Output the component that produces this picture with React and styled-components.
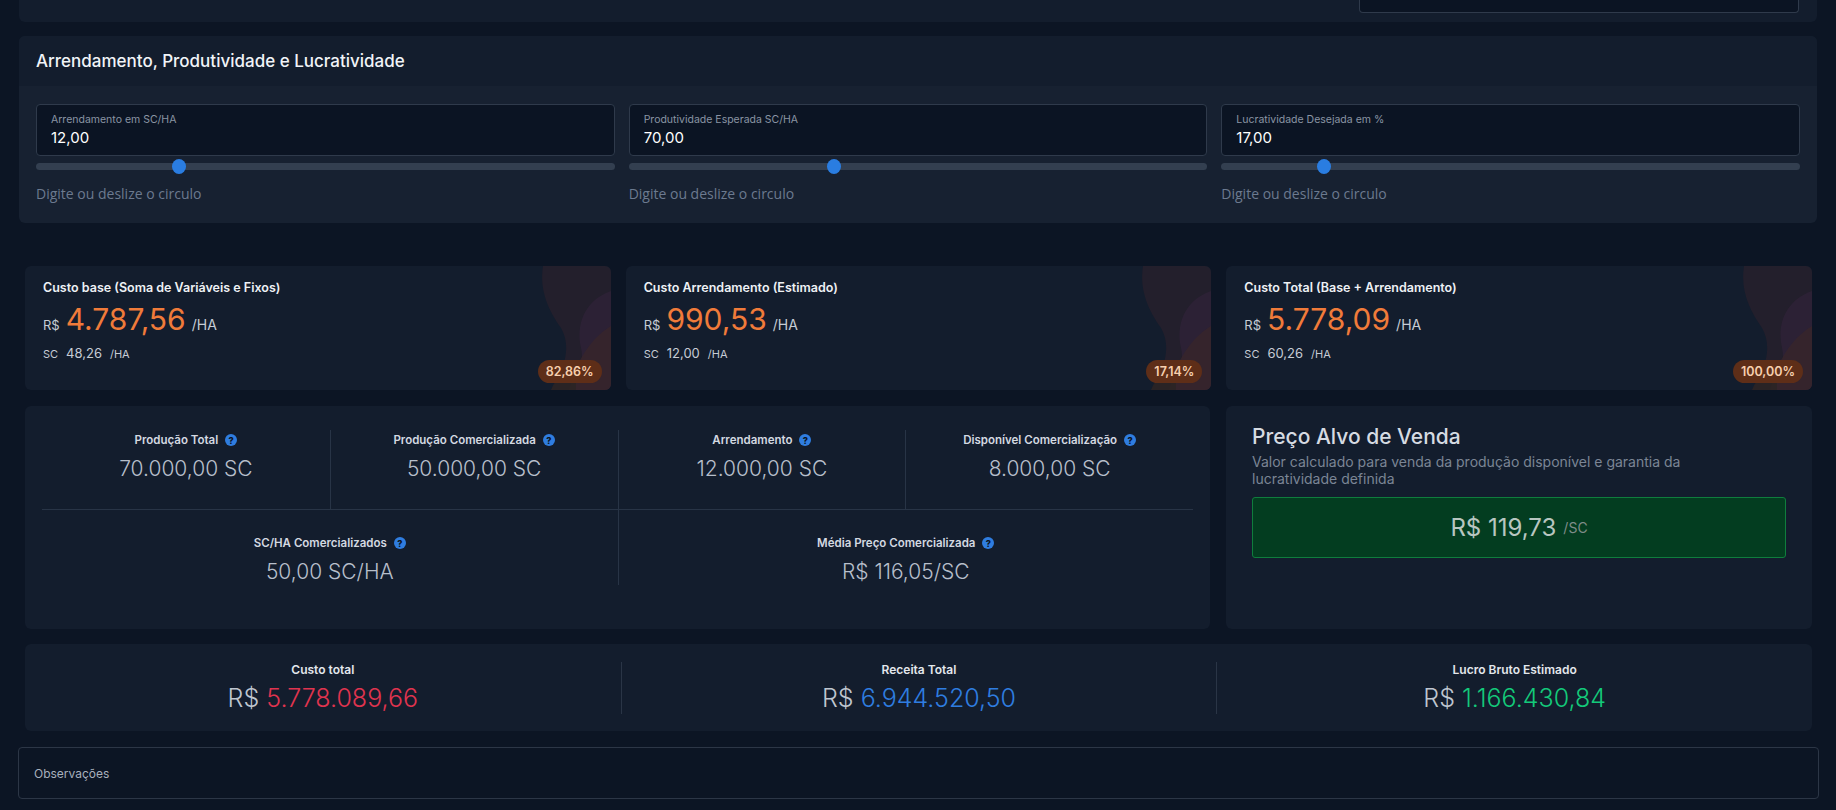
import React from "react";
import styled, { createGlobalStyle } from "styled-components";

const G = createGlobalStyle`
  body { margin:0; background:#0c1524; font-family: Inter, "Noto Sans", sans-serif; color:#e5e9f0; }
  * { box-sizing:border-box; }
`;
const Page = styled.div`width:1836px;height:810px;overflow:hidden;display:flex;flex-direction:column;`;
const TopPanel = styled.div`margin:0 19px;height:22px;background:#131d2d;border-radius:0 0 6px 6px;display:flex;justify-content:flex-end;align-items:flex-end;padding:0 18px 9px 0;`;
const TopInput = styled.div`width:440px;height:13px;border:1px solid #2f3a4b;border-top:none;border-radius:0 0 4px 4px;background:#0b1423;`;
const Section = styled.section`margin:14px 19px 0;background:#172131;border-radius:6px;overflow:hidden;height:187px;`;
const SectionHead = styled.div`height:50px;background:#131d2d;display:flex;align-items:center;padding-left:17px;font-size:17px;font-weight:500;color:#f1f4f8;`;
const Inputs = styled.div`display:grid;grid-template-columns:repeat(3,1fr);gap:14px;padding:18px 17px 0;`;
const Field = styled.div`display:flex;flex-direction:column;`;
const InputBox = styled.div`height:52px;border:1px solid #2f3a4b;border-radius:4px;background:#0b1423;padding:8px 14px 0;display:flex;flex-direction:column;`;
const Label = styled.span`font-size:10.5px;color:#8a94a4;`;
const Value = styled.span`font-size:15px;color:#fff;margin-top:2px;`;
const Track = styled.div`position:relative;margin-top:7px;height:7px;border-radius:4px;background:#333f50;`;
const Thumb = styled.div`position:absolute;top:50%;width:14px;height:15px;margin-left:-7px;margin-top:-7.5px;border-radius:50%;background:#2a7de1;`;
const Help = styled.span`margin-top:14px;font-family:"Open Sans",sans-serif;font-size:14px;color:#6c7a8f;`;

const Cards = styled.div`margin:43px 24px 0 25px;display:grid;grid-template-columns:repeat(3,1fr);gap:15px;`;
const Card = styled.div`position:relative;height:124px;background:#131d2d;border-radius:6px;overflow:hidden;padding:14px 18px;`;
const CardTitle = styled.div`font-size:12.5px;font-weight:600;color:#eef1f5;position:relative;`;
const BigLine = styled.div`display:flex;align-items:baseline;gap:6px;margin-top:6px;position:relative;`;
const Small = styled.span`font-size:${p=>p.$s||13}px;color:#c6ccd5;`;
const Big = styled.span`font-size:30px;color:#f07b3a;`;
const SubLine = styled.div`display:flex;align-items:baseline;gap:8px;margin-top:8px;position:relative;`;
const Badge = styled.span`position:absolute;right:9px;bottom:7px;height:23px;padding:0 8px;border-radius:12px;background:#5e2e18;color:#f7cfae;font-size:12.5px;font-weight:600;display:flex;align-items:center;`;
const Blob = styled.svg`position:absolute;right:0;top:0;`;

const Row = styled.div`margin:16px 24px 0 25px;display:grid;grid-template-columns:1185px 1fr;gap:16px;`;
const Panel = styled.div`background:#131d2d;border-radius:6px;height:223px;`;
const StatsGrid = styled.div`padding:24px 17px 0;`;
const StatRow = styled.div`display:grid;grid-template-columns:repeat(${p=>p.$n},1fr);border-top:${p=>p.$top?"1px solid #283446":"none"};`;
const Stat = styled.div`display:flex;flex-direction:column;align-items:center;padding-top:${p=>p.$pt}px;height:${p=>p.$h}px;border-left:${p=>p.$first?"none":"1px solid #283446"};`;
const StatLabel = styled.div`font-size:11.5px;font-weight:600;color:#d4d9e1;display:flex;align-items:center;gap:7px;`;
const StatValue = styled.div`font-size:21px;color:#b7bfcb;margin-top:9px;font-weight:300;`;
const Q = styled.span`width:12px;height:12px;border-radius:50%;background:#2f7de0;color:#0c1524;font-size:9px;font-weight:800;display:inline-flex;align-items:center;justify-content:center;`;
const Target = styled(Panel)`padding:18px 26px;`;
const TTitle = styled.div`font-size:21px;font-weight:500;color:#d6dbe2;`;
const TSub = styled.div`font-size:14px;color:#7b8595;line-height:17px;margin-top:4px;`;
const GreenBox = styled.div`margin-top:10px;height:61px;background:#033d20;border:1px solid #0f7d3d;border-radius:3px;display:flex;align-items:center;justify-content:center;gap:7px;`;
const Price = styled.span`font-size:${p=>p.$s}px;color:${p=>p.$c};`;
const Totals = styled.div`margin:15px 24px 0 25px;height:87px;background:#131d2d;border-radius:6px;display:grid;grid-template-columns:repeat(3,1fr);align-items:center;`;
const Total = styled.div`display:flex;flex-direction:column;align-items:center;border-left:${p=>p.$first?"none":"1px solid #2a3546"};height:52px;justify-content:center;`;
const TLabel = styled.div`font-size:12px;font-weight:600;color:#e3e7ec;`;
const TVal = styled.div`font-size:25px;color:#bfc6d0;margin-top:6px;font-weight:300;span{color:${p=>p.$c};}`;
const Obs = styled.div`margin:16px 17px 0 18px;height:52px;border:1px solid #2c3646;border-radius:4px;display:flex;align-items:center;padding-left:15px;font-size:12px;color:#a8b0bc;`;

const Deco = () => (
  <Blob width="90" height="124" viewBox="0 0 90 124">
    <path d="M22 0 C18 25 28 45 40 62 C50 80 45 100 30 124 L90 124 L90 0 Z" fill="#231f2c" />
    <path d="M90 25 C62 35 55 60 60 82 C64 100 55 115 50 124 L90 124 Z" fill="#2e2136" opacity="0.9"/>
    <path d="M90 60 C70 72 55 95 48 124 L90 124 Z" fill="#38252a" opacity="0.8"/>
    <path d="M30 124 C35 110 45 104 55 104 L55 124 Z" fill="#2a2424" opacity="0.8"/>
  </Blob>
);

const inputs = [["Arrendamento em SC/HA","12,00",24.7],["Produtividade Esperada SC/HA","70,00",35.4],["Lucratividade Desejada em %","17,00",17.8]];
const cards = [["Custo base (Soma de Variáveis e Fixos)","4.787,56","48,26","82,86%"],["Custo Arrendamento (Estimado)","990,53","12,00","17,14%"],["Custo Total (Base + Arrendamento)","5.778,09","60,26","100,00%"]];

export default function App(){
  return (<Page><G/>
    <TopPanel><TopInput/></TopPanel>
    <Section>
      <SectionHead>Arrendamento, Produtividade e Lucratividade</SectionHead>
      <Inputs>{inputs.map(([l,v,p])=>(
        <Field key={l}><InputBox><Label>{l}</Label><Value>{v}</Value></InputBox>
          <Track><Thumb style={{left:p+"%"}}/></Track>
          <Help>Digite ou deslize o circulo</Help></Field>))}
      </Inputs>
    </Section>
    <Cards>{cards.map(([t,v,s,b])=>(
      <Card key={t}><Deco/><CardTitle>{t}</CardTitle>
        <BigLine><Small $s={13}>R$</Small><Big>{v}</Big><Small $s={14}>/HA</Small></BigLine>
        <SubLine><Small $s={11}>SC</Small><Small $s={13}>{s}</Small><Small $s={11}>/HA</Small></SubLine>
        <Badge>{b}</Badge></Card>))}
    </Cards>
    <Row>
      <Panel><StatsGrid>
        <StatRow $n={4}>{[["Produção Total","70.000,00 SC"],["Produção Comercializada","50.000,00 SC"],["Arrendamento","12.000,00 SC"],["Disponível Comercialização","8.000,00 SC"]].map(([l,v],i)=>(
          <Stat key={l} $first={i===0} $pt={3} $h={79}><StatLabel>{l}<Q>?</Q></StatLabel><StatValue>{v}</StatValue></Stat>))}</StatRow>
        <StatRow $n={2} $top>{[["SC/HA Comercializados","50,00 SC/HA"],["Média Preço Comercializada","R$ 116,05/SC"]].map(([l,v],i)=>(
          <Stat key={l} $first={i===0} $pt={26} $h={75}><StatLabel>{l}<Q>?</Q></StatLabel><StatValue>{v}</StatValue></Stat>))}</StatRow>
      </StatsGrid></Panel>
      <Target>
        <TTitle>Preço Alvo de Venda</TTitle>
        <TSub>Valor calculado para venda da produção disponível e garantia da<br/>lucratividade definida</TSub>
        <GreenBox><Price $s={24} $c="#b8c6c0">R$ 119,73</Price><Price $s={14} $c="#7f8c88">/SC</Price></GreenBox>
      </Target>
    </Row>
    <Totals>
      <Total $first><TLabel>Custo total</TLabel><TVal $c="#e0344f">R$ <span>5.778.089,66</span></TVal></Total>
      <Total><TLabel>Receita Total</TLabel><TVal $c="#2f7de0">R$ <span>6.944.520,50</span></TVal></Total>
      <Total><TLabel>Lucro Bruto Estimado</TLabel><TVal $c="#13c97a">R$ <span>1.166.430,84</span></TVal></Total>
    </Totals>
    <Obs>Observações</Obs>
  </Page>);
}
